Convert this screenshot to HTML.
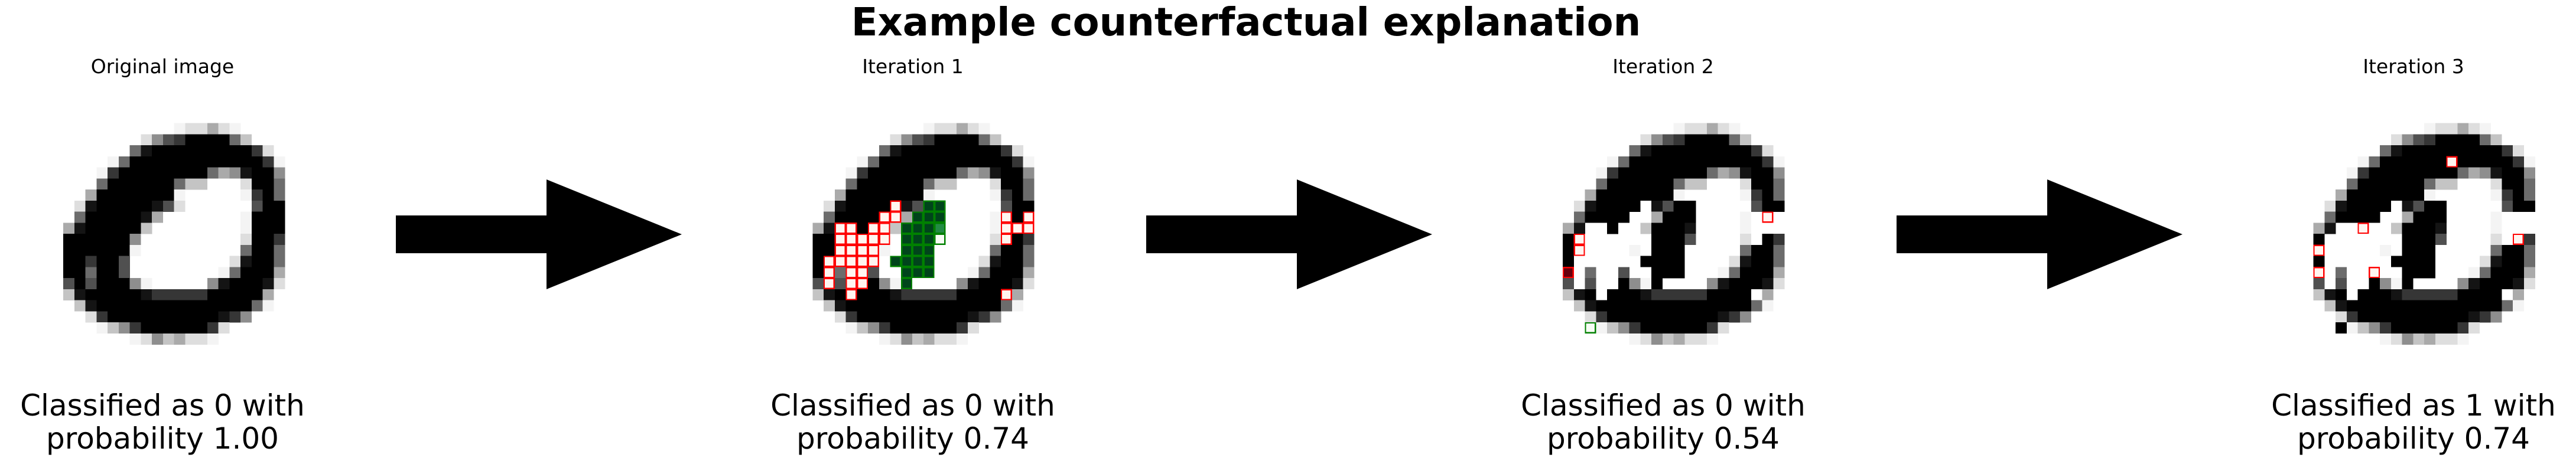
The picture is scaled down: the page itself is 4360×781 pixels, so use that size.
<!DOCTYPE html>
<html><head><meta charset="utf-8">
<style>
html,body{margin:0;padding:0;background:#fff;}
body{width:4360px;height:781px;position:relative;overflow:hidden;font-family:"DejaVu Sans","Liberation Sans",sans-serif;color:#000;}
.t{position:absolute;white-space:nowrap;text-align:center;transform:translateX(-50%);}
#main{left:2109px;top:0px;font-size:65.5px;font-weight:bold;line-height:76px;}
.pt{font-size:33px;line-height:40px;top:93px;}
.cap{font-size:50px;line-height:56px;top:659px;}
svg{position:absolute;left:0;top:0;}
</style></head><body>
<div class="t" id="main">Example counterfactual explanation</div>
<div class="t pt" style="left:275px">Original image</div>
<div class="t pt" style="left:1545px">Iteration 1</div>
<div class="t pt" style="left:2815px">Iteration 2</div>
<div class="t pt" style="left:4085px">Iteration 3</div>
<div class="t cap" style="left:275px">Classified as 0 with<br>probability 1.00</div>
<div class="t cap" style="left:1545px">Classified as 0 with<br>probability 0.74</div>
<div class="t cap" style="left:2815px">Classified as 0 with<br>probability 0.54</div>
<div class="t cap" style="left:4085px">Classified as 1 with<br>probability 0.74</div>
<svg id="s" width="4360" height="781" xmlns="http://www.w3.org/2000/svg" shape-rendering="crispEdges">
<g fill="#000">
<polygon points="670,365 925,365 925,304 1154,397 925,490 925,429 670,429" shape-rendering="auto"/>
<polygon points="1940,365 2195,365 2195,304 2424,397 2195,490 2195,429 1940,429" shape-rendering="auto"/>
<polygon points="3210,365 3465,365 3465,304 3694,397 3465,490 3465,429 3210,429" shape-rendering="auto"/>
</g>
</svg>
<script>
var base=[
"..........abbdba....",
".......begh####fc...",
"......fi#########hb.",
"....af############ha",
"...ah########fdei##e",
"...f######fcc...b##f",
"..d#######a.....ah#f",
".bi#####igb......g##",
".f#####id.......a###",
"di#####c........a###",
"######e.........b##h",
"######a.........f##f",
"##h##g.........bi##f",
"##f##g........af###d",
"g#g###ea.....ei###ib",
"ci#####ihhhhh#####d.",
".ci##############fa.",
"..bh##########ihe...",
"...aceh######hb.....",
"......abecdbba......"];
function mod(m){var r=base.slice();for(var k in m)r[k]=m[k];return r;}
var d2=mod({7:".bi####RigKK.....g##",8:".f####RRdKKK....aR#R",9:"diRR#RRcKKKL....aRRR",10:"##RRRRR.KKKG....bR#h",11:"##RRRRa.KKK.....f##f",12:"#RRRRR.KKKK....bi##f",13:"#RfRRg..KKK...af###d",14:"gRgRR#eaK....ei###ib",15:"ci#R###ihhhhh####Rd."});
var c3={7:".bi####.ig##.....g##",8:".f####..d###....a.R.",9:"di..#..c###i....a...",10:"#R......###g....b.#h",11:"#R....a.###.....f##f",12:"#......####....bi##f",13:"D.f..g..###...af###d",14:"g.g..#ea#....ei###ib",15:"ci#.###ihhhhh####.d.",18:"..Gaceh######hb....."};
var d3=mod(c3);
var c4={};for(var k in c3)c4[k]=c3[k];
c4[3]="....af######R#####ha";c4[8]=".f####..d###....a...";c4[9]="di..R..c###i....a...";c4[10]="#.......###g....b.Rh";c4[11]="R.....a.###.....f##f";c4[13]="R.f..R..###...af###d";c4[18]="..#aceh######hb.....";
var d4=mod(c4);
var G={'.':null,'a':'#f4f4f4','b':'#dedede','c':'#c4c4c4','d':'#aaaaaa','e':'#8e8e8e','f':'#6c6c6c','g':'#505050','h':'#363636','i':'#141414','#':'#000000'};
var O={'R':['#fff5f0','#ff0000'],'D':['#67000d','#ff0000'],'G':['#f7fcf5','#008000'],'K':['#00441b','#008000'],'L':['#238b45','#008000']};
var svg=document.getElementById('s'),out='';
var cs=18.75;
function draw(d,x0,y0){
 var over='';
 for(var r=0;r<20;r++)for(var c=0;c<20;c++){
  var ch=d[r][c],x=x0+c*cs,y=y0+r*cs;
  if(O[ch]){over+='<rect x="'+(x+1)+'" y="'+(y+1)+'" width="'+(cs-2)+'" height="'+(cs-2)+'" fill="'+O[ch][0]+'" stroke="'+O[ch][1]+'" stroke-width="2.2"/>';}
  else if(G[ch]){out+='<rect x="'+x+'" y="'+y+'" width="'+(cs+0.3)+'" height="'+(cs+0.3)+'" fill="'+G[ch]+'"/>';}
 }
 out+=over;
}
draw(base,107,208.5);draw(d2,1375.3,208.5);draw(d3,2645,208.5);draw(d4,3915.5,208.5);
svg.insertAdjacentHTML('beforeend',out);
</script>
</body></html>
